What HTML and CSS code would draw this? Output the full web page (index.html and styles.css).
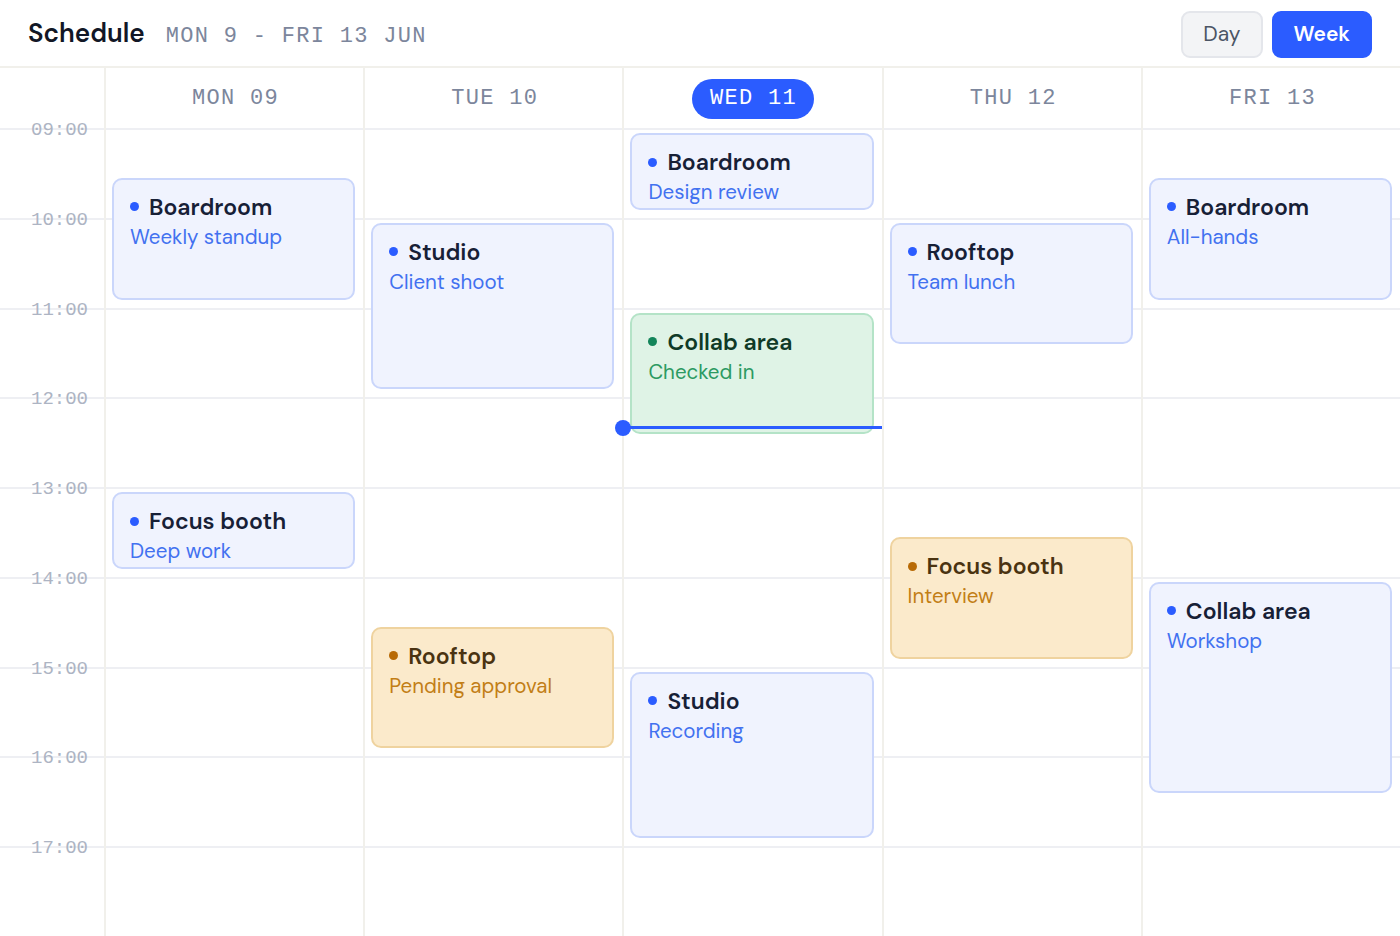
FILE: index.html
```html
<!DOCTYPE html>
<html lang="en">
<head>
    <meta charset="UTF-8">
    <meta name="viewport" content="width=device-width, initial-scale=1.0">
    <title>Schedule</title>
    <link rel="stylesheet" href="styles.css">
</head>
<body>

<div class="page">
    <!-- Top bar -->
    <div class="topbar">
        <div class="title-group">
            <h1>Schedule</h1>
            <span class="range">MON 9 - FRI 13 JUN</span>
        </div>
        <div class="view-switch">
            <button class="view-btn">Day</button>
            <button class="view-btn active">Week</button>
        </div>
    </div>

    <!-- Day headers -->
    <div class="day-header">
        <div class="gutter"></div>
        <div class="day-name"><span>MON 09</span></div>
        <div class="day-name"><span>TUE 10</span></div>
        <div class="day-name"><span class="today">WED 11</span></div>
        <div class="day-name"><span>THU 12</span></div>
        <div class="day-name"><span>FRI 13</span></div>
    </div>

    <!-- Week grid -->
    <div class="week">
        <div class="hour-row r1"><span class="hour-label">09:00</span></div>
        <div class="hour-row r2"><span class="hour-label">10:00</span></div>
        <div class="hour-row r3"><span class="hour-label">11:00</span></div>
        <div class="hour-row r4"><span class="hour-label">12:00</span></div>
        <div class="hour-row r5"><span class="hour-label">13:00</span></div>
        <div class="hour-row r6"><span class="hour-label">14:00</span></div>
        <div class="hour-row r7"><span class="hour-label">15:00</span></div>
        <div class="hour-row r8"><span class="hour-label">16:00</span></div>
        <div class="hour-row r9"><span class="hour-label">17:00</span></div>

        <!-- Monday -->
        <div class="day-col c1">
            <div class="event blue" style="--start: 0.5; --end: 2;">
                <div class="event-title">Boardroom</div>
                <div class="event-sub">Weekly standup</div>
            </div>
            <div class="event blue" style="--start: 4; --end: 5;">
                <div class="event-title">Focus booth</div>
                <div class="event-sub">Deep work</div>
            </div>
        </div>

        <!-- Tuesday -->
        <div class="day-col c2">
            <div class="event blue" style="--start: 1; --end: 3;">
                <div class="event-title">Studio</div>
                <div class="event-sub">Client shoot</div>
            </div>
            <div class="event amber" style="--start: 5.5; --end: 7;">
                <div class="event-title">Rooftop</div>
                <div class="event-sub">Pending approval</div>
            </div>
        </div>

        <!-- Wednesday (today) -->
        <div class="day-col c3">
            <div class="event blue" style="--start: 0; --end: 1;">
                <div class="event-title">Boardroom</div>
                <div class="event-sub">Design review</div>
            </div>
            <div class="event green" style="--start: 2; --end: 3.5;">
                <div class="event-title">Collab area</div>
                <div class="event-sub">Checked in</div>
            </div>
            <div class="event blue" style="--start: 6; --end: 8;">
                <div class="event-title">Studio</div>
                <div class="event-sub">Recording</div>
            </div>
            <div class="now-line" style="--at: 3.333;"></div>
        </div>

        <!-- Thursday -->
        <div class="day-col c4">
            <div class="event blue" style="--start: 1; --end: 2.5;">
                <div class="event-title">Rooftop</div>
                <div class="event-sub">Team lunch</div>
            </div>
            <div class="event amber" style="--start: 4.5; --end: 6;">
                <div class="event-title">Focus booth</div>
                <div class="event-sub">Interview</div>
            </div>
        </div>

        <!-- Friday -->
        <div class="day-col c5">
            <div class="event blue" style="--start: 0.5; --end: 2;">
                <div class="event-title">Boardroom</div>
                <div class="event-sub">All-hands</div>
            </div>
            <div class="event blue" style="--start: 5; --end: 7.5;">
                <div class="event-title">Collab area</div>
                <div class="event-sub">Workshop</div>
            </div>
        </div>
    </div>
</div>

</body>
</html>
```

FILE: styles.css
```css
body {
    margin: 0;
    padding: 0;
    background-color: #ffffff;
    font-family: "DM Sans", Inter, "Noto Sans", sans-serif;
    color: #141a2b;
}
.page {
    height: 100vh;
    display: flex;
    flex-direction: column;
    overflow: hidden;
}

/* Top bar */
.topbar {
    height: 66px;
    flex-shrink: 0;
    display: flex;
    justify-content: space-between;
    align-items: center;
    padding: 0 28px;
    border-bottom: 2px solid #f1f0eb;
}
.title-group {
    display: flex;
    align-items: baseline;
    gap: 21px;
}
h1 {
    margin: 0;
    font-size: 26px;
    font-weight: 600;
    color: #121726;
}
.range {
    font-family: "Liberation Mono", monospace;
    font-size: 22px;
    letter-spacing: 1.3px;
    color: #7c869c;
}
.view-switch {
    display: flex;
    gap: 9px;
    margin-top: 2px;
}
.view-btn {
    height: 47px;
    padding: 0 20px;
    border-radius: 9px;
    border: 2px solid #e4e6eb;
    background-color: #f3f4f6;
    color: #4b5565;
    font-family: inherit;
    font-size: 21px;
    cursor: pointer;
}
.view-btn.active {
    background-color: #2b5cff;
    border-color: #2b5cff;
    color: #ffffff;
    font-weight: 600;
}

/* Day headers */
.day-header {
    height: 60px;
    flex-shrink: 0;
    display: grid;
    grid-template-columns: 104px repeat(5, 1fr);
}
.day-name {
    border-left: 2px solid #f1f0eb;
    display: flex;
    justify-content: center;
    align-items: center;
}
.day-name span {
    font-family: "Liberation Mono", monospace;
    font-size: 22px;
    letter-spacing: 1.3px;
    color: #7c869c;
    padding: 0 1px 0 3px;
}
.day-name .today {
    background-color: #2b5cff;
    color: #ffffff;
    border-radius: 20px;
    height: 40px;
    line-height: 40px;
    padding: 0 17px 0 18px;
    margin-top: 2px;
}

/* Week grid */
.week {
    flex: 1;
    display: grid;
    grid-template-columns: 104px repeat(5, 1fr);
    grid-template-rows: repeat(9, 1fr);
}
.hour-row {
    grid-column: 1 / -1;
    border-top: 2px solid #eeeff3;
}
.r1 { grid-row: 1; }
.r2 { grid-row: 2; }
.r3 { grid-row: 3; }
.r4 { grid-row: 4; }
.r5 { grid-row: 5; }
.r6 { grid-row: 6; }
.r7 { grid-row: 7; }
.r8 { grid-row: 8; }
.r9 { grid-row: 9; }
.hour-label {
    display: block;
    width: 88px;
    height: 22px;
    line-height: 22px;
    margin-top: -11px;
    text-align: right;
    font-family: "Liberation Mono", monospace;
    font-size: 19px;
    color: #adb4c3;
}
.day-col {
    grid-row: 1 / -1;
    position: relative;
    border-left: 2px solid #f1f0eb;
}
.c1 { grid-column: 2; }
.c2 { grid-column: 3; }
.c3 { grid-column: 4; }
.c4 { grid-column: 5; }
.c5 { grid-column: 6; }

/* Events */
.event {
    position: absolute;
    left: 6px;
    right: 8px;
    top: calc(var(--start) / 9 * 100% + 5px);
    height: calc((var(--end) - var(--start)) / 9 * 100% - 13px);
    box-sizing: border-box;
    padding: 13px 16px 12px;
    border-radius: 10px;
    border: 2px solid #cad6fb;
    background-color: #f0f3fe;
}
.event-title {
    display: flex;
    align-items: center;
    gap: 10px;
    font-size: 23px;
    line-height: 28px;
    font-weight: 600;
    color: #172036;
}
.event-title::before {
    content: "";
    width: 9px;
    height: 9px;
    border-radius: 50%;
    background-color: #2b5cff;
}
.event-sub {
    margin-top: 3px;
    font-size: 20.5px;
    line-height: 26px;
    color: #4271f0;
}
.event.green {
    background-color: #dff3e6;
    border-color: #b4e3c7;
}
.event.green .event-title {
    color: #0f3a27;
}
.event.green .event-title::before {
    background-color: #13855a;
}
.event.green .event-sub {
    color: #2c9a62;
}
.event.amber {
    background-color: #fbeacb;
    border-color: #efd39f;
}
.event.amber .event-title {
    color: #4a3311;
}
.event.amber .event-title::before {
    background-color: #b86a05;
}
.event.amber .event-sub {
    color: #c27e16;
}

/* Current time */
.now-line {
    position: absolute;
    left: -2px;
    right: 0;
    top: calc(var(--at) / 9 * 100% - 1px);
    height: 3px;
    background-color: #2b5cff;
    z-index: 2;
}
.now-line::before {
    content: "";
    position: absolute;
    left: -7px;
    top: -6px;
    width: 16px;
    height: 16px;
    border-radius: 50%;
    background-color: #2b5cff;
}
```
